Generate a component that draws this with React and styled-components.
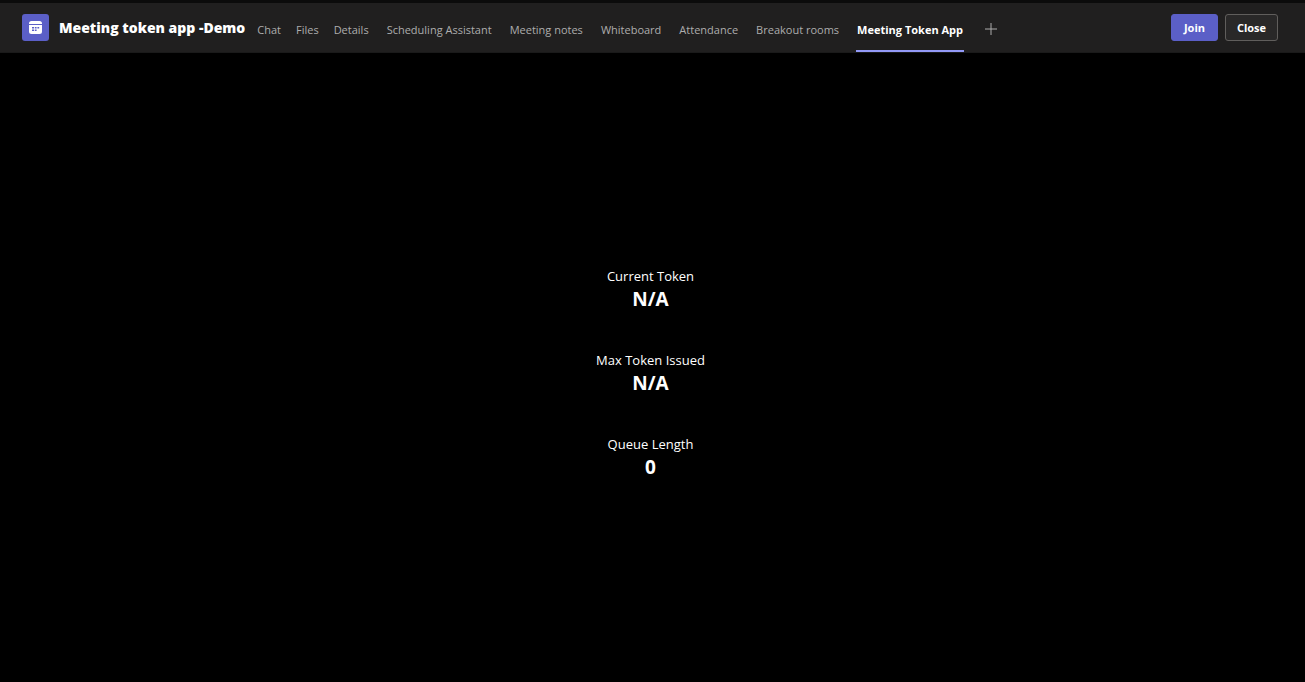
import React from "react";
import styled, { createGlobalStyle } from "styled-components";

const Global = createGlobalStyle`
  * { box-sizing: border-box; }
  body { margin: 0; background: #000; color: #fff; font-family: "Open Sans", "Noto Sans", sans-serif; }
`;

const Page = styled.div`
  min-height: 100vh;
  display: flex;
  flex-direction: column;
`;

const Header = styled.header`
  display: flex;
  align-items: stretch;
  height: 53px;
  padding: 0 27px 0 22px;
  background: #201f1f;
  border-top: 3px solid #0b0b0b;
  border-bottom: 1px solid #1a1a1a;
`;

const Badge = styled.span`
  display: flex;
  align-items: center;
  justify-content: center;
  align-self: center;
  flex: none;
  width: 27px;
  height: 27px;
  margin-right: 10px;
  border-radius: 3px;
  background: #5b5fc7;
`;

const Title = styled.h1`
  align-self: center;
  margin: 0 11px 0 0;
  font-size: 14px;
  line-height: 20px;
  font-weight: 800;
  white-space: nowrap;
`;

const Tabs = styled.nav`
  display: flex;
`;

const Tab = styled.a`
  display: flex;
  align-items: center;
  margin-right: ${(p) => (p.$compact ? 13 : 16)}px;
  padding: 6px 1px 0;
  border-bottom: 2px solid ${(p) => (p.$active ? "#9299f7" : "transparent")};
  color: ${(p) => (p.$active ? "#fff" : "#adadad")};
  font-size: 11px;
  line-height: 16px;
  font-weight: ${(p) => (p.$active ? 700 : 400)};
  text-decoration: none;
  white-space: nowrap;
`;

const AddTab = styled.button`
  display: flex;
  align-items: center;
  margin-left: 4px;
  padding: 2px 1px 0;
  border: 0;
  background: none;
  color: #adadad;
`;

const Actions = styled.div`
  display: flex;
  align-items: center;
  gap: 7px;
  margin-left: auto;
`;

const Button = styled.button`
  height: 27px;
  width: ${(p) => (p.$primary ? 47 : 53)}px;
  padding: 0;
  border: 1px solid ${(p) => (p.$primary ? "#5b5fc7" : "#605e5c")};
  border-radius: 3px;
  background: ${(p) => (p.$primary ? "#5b5fc7" : "#292828")};
  color: #fff;
  font: 700 11px/16px "Open Sans", "Noto Sans", sans-serif;
`;

const Main = styled.main`
  flex: 1;
  display: flex;
  flex-direction: column;
  align-items: center;
  justify-content: center;
  gap: 38px;
  padding: 10px 4px 0 0;
`;

const Stat = styled.section`
  display: flex;
  flex-direction: column;
  align-items: center;
`;

const Label = styled.h2`
  margin: 0;
  font-size: 13px;
  line-height: 20px;
  font-weight: 400;
`;

const Value = styled.p`
  margin: 0;
  font-size: 19px;
  line-height: 26px;
  font-weight: 700;
`;

const tabs = [
  "Chat", "Files", "Details", "Scheduling Assistant", "Meeting notes",
  "Whiteboard", "Attendance", "Breakout rooms", "Meeting Token App",
];

const stats = [
  ["Current Token", "N/A"],
  ["Max Token Issued", "N/A"],
  ["Queue Length", "0"],
];

const CalendarIcon = () => (
  <svg width="13" height="13" viewBox="0 0 13 13" aria-hidden="true">
    <path fill="#fff" d="M2.5 0h8A2.5 2.5 0 0 1 13 2.5V3H0v-.5A2.5 2.5 0 0 1 2.5 0ZM0 4h13v6.5a2.5 2.5 0 0 1-2.5 2.5h-8A2.5 2.5 0 0 1 0 10.5Z" />
    <path fill="#5b5fc7" d="M3 6h2v1.5H3ZM5.8 6h1.8v1.5H5.8ZM8.4 6h1.8v1.5H8.4ZM3 8.6h2V10H3ZM5.8 8.6h1.8V10H5.8Z" />
  </svg>
);

const PlusIcon = () => (
  <svg width="12" height="12" viewBox="0 0 12 12" aria-hidden="true">
    <path d="M6 0v12M0 6h12" stroke="currentColor" fill="none" />
  </svg>
);

export default function App() {
  return (
    <Page>
      <Global />
      <Header>
        <Badge><CalendarIcon /></Badge>
        <Title>Meeting token app -Demo</Title>
        <Tabs>
          {tabs.map((name, i) => (
            <Tab key={name} href="#" $compact={i < 2} $active={name === "Meeting Token App"}>{name}</Tab>
          ))}
        </Tabs>
        <AddTab type="button" aria-label="Add a tab"><PlusIcon /></AddTab>
        <Actions>
          <Button type="button" $primary>Join</Button>
          <Button type="button">Close</Button>
        </Actions>
      </Header>
      <Main>
        {stats.map(([label, value]) => (
          <Stat key={label}>
            <Label>{label}</Label>
            <Value>{value}</Value>
          </Stat>
        ))}
      </Main>
    </Page>
  );
}
